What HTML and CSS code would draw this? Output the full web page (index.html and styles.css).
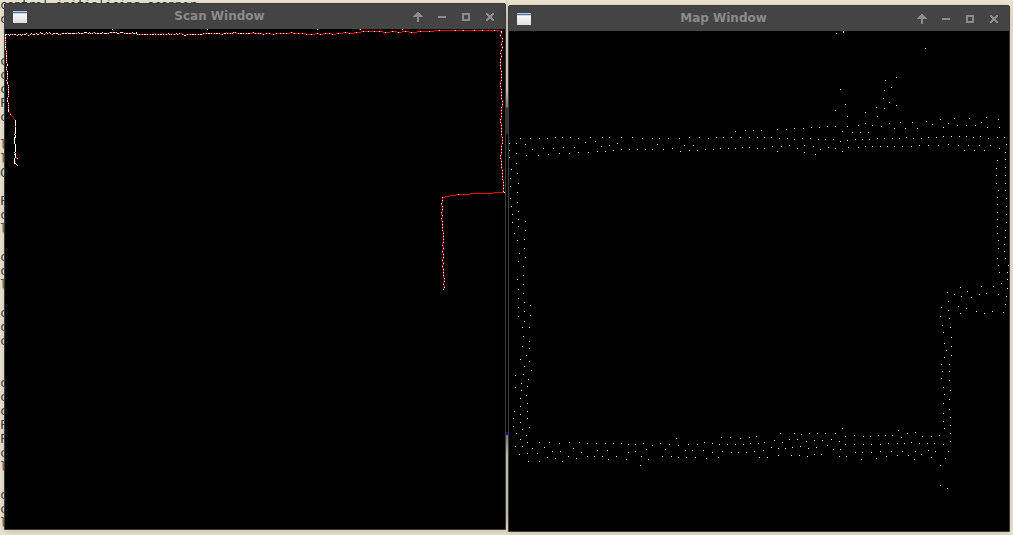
FILE: index.html
```
<!DOCTYPE html>
<html lang="en">
<head>
<meta charset="utf-8">
<title>Scan Window</title>
<link rel="stylesheet" href="styles.css">
</head>
<body>
<main class="desktop">
<pre class="terminal">control initialising scanner
c


c
c
c
F
c

<b>l</b>
<b>l</b>
C

F
c
<b>l</b>

c
c
<b>l</b>

c
c
c


c
c
c
F
F
c
<b>l</b>

c
c
<b>l</b></pre>
<div class="gutter"></div>
<section class="window window-scan">
  <header class="titlebar">
    <span class="app-icon"></span>
    <h1 class="title">Scan Window</h1>
    <svg class="controls" width="84" height="12" shape-rendering="crispEdges"><path d="M5 1h2v10H5zM4 2h4v2H4zM3 3h6v2H3zM2 4h3v2H2zM7 4h3v2H7zM1 5h2v1H1zM9 5h2v1H9z"/><path d="M26 5h8v2h-8z"/><path d="M50 2h8v8h-8zM52 4v4h4V4z" fill-rule="evenodd"/><path d="M74 2h2v1h1v1h2V3h1V2h2v2h-1v1h-1v2h1v1h1v2h-2V9h-1V8h-2v1h-1v1h-2V8h1V7h1V5h-1V4h-1z"/></svg>
  </header>
  <canvas id="scan" width="500" height="500"></canvas>
</section>
<section class="window window-map">
  <header class="titlebar">
    <span class="app-icon"></span>
    <h1 class="title">Map Window</h1>
    <svg class="controls" width="84" height="12" shape-rendering="crispEdges"><path d="M5 1h2v10H5zM4 2h4v2H4zM3 3h6v2H3zM2 4h3v2H2zM7 4h3v2H7zM1 5h2v1H1zM9 5h2v1H9z"/><path d="M26 5h8v2h-8z"/><path d="M50 2h8v8h-8zM52 4v4h4V4z" fill-rule="evenodd"/><path d="M74 2h2v1h1v1h2V3h1V2h2v2h-1v1h-1v2h1v1h1v2h-2V9h-1V8h-2v1h-1v1h-2V8h1V7h1V5h-1V4h-1z"/></svg>
  </header>
  <canvas id="map" width="500" height="500"></canvas>
</section>
</main>
<script src="plot.js"></script>
</body>
</html>
```
FILE: styles.css
```
body { margin: 0; background: #ece6d1; }
.desktop { position: relative; width: 1013px; height: 535px; overflow: hidden; }
.terminal {
  margin: -2px 0 0;
  font: 12px/14px "DejaVu Sans Mono", monospace;
  letter-spacing: -0.224px; color: #263240;
}
.terminal b { font-weight: normal; color: #6b4a20; }
.window {
  position: absolute; width: 500px; height: 525px;
  border: 1px solid #3c3c3c; background: #000;
  border-radius: 2px 2px 0 0;
  box-shadow: 0 2px 9px rgba(60, 55, 40, .22);
}
.window-scan { left: 4px; top: 3px; }
.window-map { left: 508px; top: 5px; }
.window canvas { display: block; }
.titlebar {
  display: flex; align-items: center; box-sizing: border-box;
  height: 25px; padding: 0 9px 0 8px; background: #444;
}
.app-icon {
  width: 14px; height: 12px;
  background: linear-gradient(#b4c8e4 1px, #5678a8 1px 2px, #cbd6e6 2px 3px, #fafafa 3px, #dcdfda);
}
.title {
  flex: 1; margin: 0; text-align: center; color: #8b8b8b;
  font: bold 12px/22px "DejaVu Sans", sans-serif;
  padding-bottom: 2px;
}
.controls { fill: #8b8b8b; }
.gutter {
  position: absolute; left: 506px; top: 0; width: 2px; height: 535px; z-index: 1;
  background: linear-gradient(#ded7c4 0, #c6c0ae 20px 90px, #7b776c 107px, #333 108px 134px, #000 134px 432px, #0000c4 432px 434px, #222 434px 435px, #77746a 435px, #bdb8a7 455px 515px, #ddd6c3 535px);
}
```
FILE: plot.js
```
// Samples are in thirds of a pixel, relative to each tile's origin.
const white = '#fff', red = '#f00';
// Lit-sample patterns along a trace: w = hit, r = connecting line.
const dense = 'wwrwwwrwrwwrwwrw', mixed = 'wwrwrrwr', even = 'wrr', sparse = 'r';

function pairs(text) {
  return text.trim().split(/\s+/).map(p => p.split(',').map(Number));
}

function plotter(id, left, top) {
  const ctx = document.getElementById(id).getContext('2d');
  const px = (x, y, colour) => { ctx.fillStyle = colour; ctx.fillRect(x - left, y - top, 1, 1); };
  const at = (ox, oy, p) => [ox + Math.floor(p[0] / 3), oy + Math.floor(p[1] / 3)];
  return {
    dots(ox, oy, text, colour = white) {
      pairs(text).forEach(p => px(...at(ox, oy, p), colour));
    },
    trace(ox, oy, text, pattern) {
      const v = pairs(text).map(p => at(ox, oy, p));
      const colour = n => pattern[n % pattern.length] === 'w' ? white : red;
      let n = 0;
      for (let i = 1; i < v.length; i++) {
        const [x0, y0] = v[i - 1], [x1, y1] = v[i];
        const steps = Math.max(Math.abs(x1 - x0), Math.abs(y1 - y0));
        for (let s = 0; s < steps; s++) {
          px(Math.round(x0 + (x1 - x0) * s / steps), Math.round(y0 + (y1 - y0) * s / steps), colour(n++));
        }
      }
      px(...v[v.length - 1], colour(n));
    }
  };
}

const map = plotter('map', 509, 31);
map.dots(500, 0, `28,430 49,430 28,451 28,472 49,460 49,490 34,508 52,520 31,535
61,415 91,415 118,415 142,415 166,412 187,412 211,412 235,415 271,412 307,412 328,412 364,412 397,412 427,415 457,415 478,415 505,415 538,415 568,412 598,412 625,415 649,412 670,412 694,412 721,412 748,412 772,412
76,433 97,448 79,466 115,466 130,445 160,445 145,463 190,442 178,460 208,460 223,442 235,457 256,427 286,424 265,457 304,439 292,454 316,454 328,436 340,451 352,430 364,448 388,448 412,448 436,448 457,448 472,433 490,448 517,445 541,454 553,436 568,451 580,436 592,451 616,448 640,448 661,445 685,445 706,445 727,442 748,442 772,445 706,394 736,391 760,391`);
map.dots(753, 0, `250,100 271,94 271,97 517,145 430,232 397,241 415,262 394,271 262,268 391,295 409,307 430,316 277,313 370,322 394,325 247,331 337,337 283,349 373,349
1,391 25,391 73,388 100,388 124,385 151,385 175,382 199,382 223,379 247,379 283,379 316,376 337,370 358,376 385,379 409,370 424,385 442,367 457,385 478,367 493,385 520,364 538,373 562,358 571,382 586,370 604,355 613,376 640,376 649,355 667,376 685,367 700,352 703,382 736,358 739,382
268,394 298,397 322,397 346,397
13,412 34,412 55,412 79,415 103,415 124,418 148,415 172,415 196,418 217,418 241,418 262,424 283,421 307,418 328,418 349,418 373,415 394,415 418,415 439,415 460,412 481,415 505,415 526,412 550,412 571,409 595,409 619,409 640,409 661,412 682,409 706,415 733,412 754,412 760,433
13,445 34,445 58,439 85,439 109,436 73,454 133,445 154,436 154,457 181,439 187,463 202,448 226,442 247,445 268,454 286,442 316,442 337,439 358,439 382,439 403,439 424,439 448,439 475,439 499,436 526,436 556,436 586,433 616,436 634,451 646,436 664,451 679,436 694,451 712,436 739,445 757,457 733,481 757,478 730,505 757,502 730,526 757,526`);
map.dots(913, 170, `250,16 277,16 250,40 277,40 256,61 277,61 253,82 280,85 253,103 280,109 253,127 280,133 253,148 280,157 253,169 277,181 253,190 277,202 256,211 274,223 256,235 274,244 253,265 277,265 256,286 286,286 259,307 283,307 283,328 265,340 283,355 280,379 256,373 241,349 205,349 142,352 163,364 103,367 124,373 145,379 175,382 199,373 220,370 277,403 106,394 85,412 136,409 160,415 106,421 142,430 190,424 214,430 238,424 271,427 82,439 109,445 88,466 112,472 91,487 115,502 94,520 115,529 100,541 115,556 94,562 85,583 109,583 88,604 109,604 85,625 109,631 91,652 112,661 94,673 109,688 91,700 109,718 91,730 112,742`);
map.dots(500, 170, `52,10 31,25 55,40 31,49 52,67 31,85 52,97 34,109 55,124 37,133 55,148 37,157 76,154 55,169 76,181 43,190 52,211 73,208 73,235 58,250 76,262 55,274 70,289 70,316 52,328 70,343 55,358 70,370 55,385 73,397 91,406 55,412 73,424 91,436 55,439 73,454 67,472 88,472 70,499 88,514 67,529 88,535 79,556 61,568 88,574 73,589 94,601 46,616 70,613 85,628 64,640 46,652 82,649 64,661 79,676 61,685 82,700 61,709 43,724 82,724 61,733 40,745 82,745`);
map.dots(500, 420, `61,7 40,19 67,28 88,22 49,40 79,46 61,58 82,67 46,79 67,79 58,103 82,100 97,85 85,124 118,124 112,100 118,67 148,67 178,70 208,67 238,67 262,70 289,70 316,70 340,70 364,70 385,73 406,73 430,70 457,76 481,70 508,73 535,76 565,73 592,73 613,67 637,70 658,73 682,73 706,73 730,73 751,70 775,70
133,82 157,94 181,94 142,112 166,115 187,124 205,109 220,85 244,97 229,115 262,109 283,109 292,91 307,109 322,91 325,118 349,109 379,118 385,97 406,94 424,109 439,88 445,118 421,136 487,109 496,88 514,109 535,112 559,112 586,112 556,91 577,91 610,91 619,115 637,97 655,112 667,94 694,97 715,97 739,97 763,94 778,112 529,55 664,52 691,52 721,55 748,52 769,49`);
map.dots(753, 420, `10,49 16,70 34,67 4,94 31,91 19,112 43,112 64,61 55,82 82,40 88,67 76,85 97,85 109,58 124,40 133,58 145,43 118,82 142,79 76,106 115,106 139,106 163,109 160,64 169,40 193,40 217,40 247,40 184,61 208,61 235,58 166,85 190,82 184,103 205,103 223,76 241,88 262,88 259,64 268,25 277,49 304,46 331,49 352,49 376,46 397,46 418,46 436,31 445,52 463,40 487,37 508,49 535,49 559,46 571,4 592,16 574,25 592,40 592,64
277,73 304,73 331,73 355,73 382,73 406,70 433,70 454,70 475,67 499,70 523,70 544,70 571,73 259,109 280,109 307,97 328,97 355,97 382,94 325,118 370,115 400,109 415,94 448,94 433,106 466,106 487,94 484,118 505,103 526,91 547,94 535,112 586,94 577,115 562,136 562,196 583,205`);

const scan = plotter('scan', 5, 29);
// Back wall
scan.trace(0, 0, `16,103 24,103 27,106 31,103 46,103 52,106 55,103 61,103 64,106 67,103 73,103 79,100 82,103 88,106 94,100 97,103 109,100 115,103 121,97 124,100 133,103 139,97 142,100 148,97 154,103 160,100 172,100 178,103 184,100 199,100 202,97 205,100 230,100 235,97 240,100 259,97 263,100 268,97 274,100 283,97 289,100 304,100 307,97 310,100 325,100 328,97 350,97 355,100 361,97 370,97 373,100 394,100 397,97 400,100 406,100 409,97`, dense);
scan.trace(0, 0, `409,100 412,103 460,103 463,100 466,103 484,103 487,100 490,103 499,103 505,100 508,103 514,103 517,100 523,103 529,100 532,103 538,100 544,100 556,106 559,103 607,103 610,100 658,100 661,103 667,103 670,100 676,100 679,97 682,100 697,100 700,97 706,97 709,100 756,100`, mixed);
scan.trace(250, 0, `1,100 6,97 9,97 12,100 33,100 36,103 42,103 45,100 60,100 64,103 72,103 75,100 117,100 120,97 127,97 130,100 165,100 169,103 192,103 195,100 205,100 208,103 217,103 220,100 243,100 246,103 256,103 259,100 276,100 279,97 292,97 295,100 310,100 313,97 331,97 334,94 397,94 400,97 418,97 421,94 438,94 441,97 454,97 457,94 475,94 478,97 499,97 502,94 550,94 553,91 748,91 754,94`, sparse);
scan.dots(250, 0, `9,97 15,100 24,100 30,100 39,103 48,100 57,100 69,103 78,100 90,100 99,100 108,100 123,97 132,100 144,100 156,100 169,103 183,103 201,100 210,103 225,100 237,100 247,103 265,100 286,97 298,100 319,97 340,94 355,94 373,94 388,94 406,97 427,94 445,97 466,94 484,97 511,94 538,94 568,91 616,91 640,91 673,91 697,91 733,91 754,94 202,88 331,88 457,88`);
scan.dots(250, 0, '205,88 328,88', red);
scan.dots(0, 0, '337,88 622,88');
scan.dots(0, 0, '340,91', red);
// Right wall
scan.trace(250, 0, `754,97 754,100 751,103 751,109 754,112 757,118 757,121 754,127 754,133 757,142 757,145 754,148 751,154 751,160 754,163 754,172 751,175 751,208 754,211 754,241 751,244 751,265 754,268 754,298 757,301 757,319 754,322 754,355 751,358 751,367 754,370 754,409 757,412 757,430 754,433 754,463 751,466 751,475 754,478 754,505 757,508 757,538`, even);
scan.trace(400, 170, '307,28 310,31 310,64 313,67', even);
// Alcove
scan.trace(400, 170, '313,67 280,67 277,70 211,70 208,73 169,73 166,76 151,76 148,79 136,79 133,82 127,82', sparse);
scan.dots(400, 170, '313,67 175,73');
scan.trace(400, 170, `127,82 127,97 124,100 124,106 127,109 127,124 124,127 124,133 127,136 127,142 124,145 124,151 127,154 127,181 130,184 130,217 127,220 127,226 130,229 130,238 127,241 127,247 130,250 130,265 127,268 127,274 130,277 130,283 127,286 127,292 130,295 130,322 133,325 133,334 130,337 130,343 133,346 133,352 130,355 130,358`, even);
scan.dots(400, 170, '130,358');
// Left wall
scan.trace(0, 0, `16,106 16,148 19,151 19,187 22,190 22,196 19,199 19,211 22,214 22,235 19,241 22,244 22,253 25,256 25,289 22,292 22,304 25,307 25,334`, 'wrwwrwrwr');
scan.trace(0, 0, '28,337 31,343 46,361', sparse);
scan.dots(0, 0, '25,331 25,334 31,343');
scan.trace(0, 0, '46,361 46,397 43,403 46,406 43,412 43,430 46,433 46,451 43,457 46,463 46,472 43,475 43,490 46,490 52,496', 'w');
scan.dots(0, 0, '52,475 46,412 43,463');
scan.dots(0, 0, '46,379 43,400 49,472 49,475 46,484', red);
```
